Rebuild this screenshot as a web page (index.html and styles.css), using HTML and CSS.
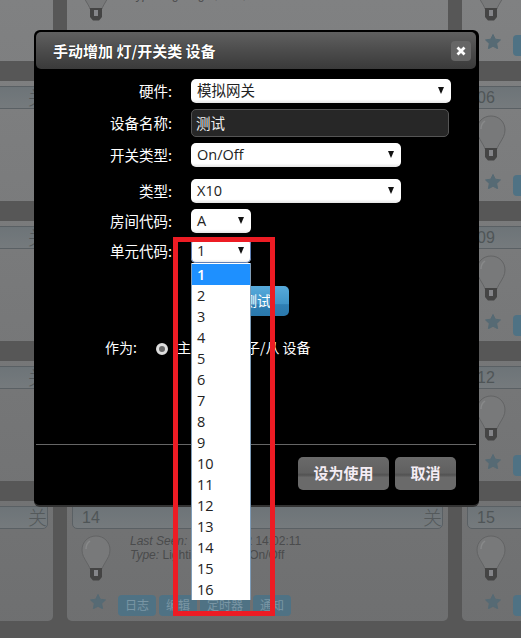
FILE: index.html
```html
<!DOCTYPE html>
<html lang="en">
<head>
    <meta charset="UTF-8">
    <meta name="viewport" content="width=device-width, initial-scale=1.0">
    <title>手动增加 灯/开关类 设备</title>
    <link rel="stylesheet" href="styles.css">
</head>
<body>

<svg class="defs" width="0" height="0">
    <defs>
        <symbol id="bulb" viewBox="0 0 30 46">
            <path d="M15 1C7 1 1 7 1 15c0 5 2.500 8.500 4.500 12C7.500 30.500 8.500 32 9 34h12c.5-2 1.500-3.500 3.500-7 2-3.500 4.500-7 4.500-12C29 7 23 1 15 1z" fill="#78797a" stroke="#636465" stroke-width="1"/>
            <path d="M9 6c-3 2-4 5-4 8" fill="none" stroke="#88898a" stroke-width="1.500"/>
            <path d="M9 33h12v9l-3 3.500h-6l-3-3.500z" fill="#444"/>
            <path d="M13 35h4v6h-4z" fill="#85868a"/>
        </symbol>
        <symbol id="star" viewBox="0 0 16 15">
            <path d="M8 .5l2.300 4.700 5.200.7-3.800 3.600.9 5.200L8 12.300l-4.600 2.400.9-5.200L.5 5.900l5.200-.7z" fill="#566a74" stroke="#566a74" stroke-linejoin="round"/>
        </symbol>
    </defs>
</svg>

<div class="device-grid">
    <div class="card"><div class="strip"><span>01</span><span class="state">关</span></div><div class="card-body"><svg class="bulb"><use href="#bulb"/></svg><p class="info"><i>Last Seen:</i> 2016-05-12 14:02:11<br><i>Type:</i> Lighting 1, X10, On/Off</p></div><div class="card-foot"><svg class="star"><use href="#star"/></svg><a class="tag">日志</a><a class="tag">编辑</a><a class="tag">定时器</a><a class="tag">通知</a></div></div>
    <div class="card"><div class="strip"><span>02</span><span class="state">关</span></div><div class="card-body"><svg class="bulb"><use href="#bulb"/></svg><p class="info"><i>Last Seen:</i> 2016-05-12 14:02:11<br><i>Type:</i> Lighting 1, X10, On/Off</p></div><div class="card-foot"><svg class="star"><use href="#star"/></svg><a class="tag">日志</a><a class="tag">编辑</a><a class="tag">定时器</a><a class="tag">通知</a></div></div>
    <div class="card"><div class="strip"><span>03</span><span class="state">关</span></div><div class="card-body"><svg class="bulb"><use href="#bulb"/></svg><p class="info"><i>Last Seen:</i> 2016-05-12 14:02:11<br><i>Type:</i> Lighting 1, X10, On/Off</p></div><div class="card-foot"><svg class="star"><use href="#star"/></svg><a class="tag">日志</a><a class="tag">编辑</a><a class="tag">定时器</a><a class="tag">通知</a></div></div>

    <div class="card"><div class="strip"><span>04</span><span class="state">关</span></div><div class="card-body"><svg class="bulb"><use href="#bulb"/></svg><p class="info"><i>Last Seen:</i> 2016-05-12 14:02:11<br><i>Type:</i> Lighting 1, X10, On/Off</p></div><div class="card-foot"><svg class="star"><use href="#star"/></svg><a class="tag">日志</a><a class="tag">编辑</a><a class="tag">定时器</a><a class="tag">通知</a></div></div>
    <div class="card"><div class="strip"><span>05</span><span class="state">关</span></div><div class="card-body"><svg class="bulb"><use href="#bulb"/></svg><p class="info"><i>Last Seen:</i> 2016-05-12 14:02:11<br><i>Type:</i> Lighting 1, X10, On/Off</p></div><div class="card-foot"><svg class="star"><use href="#star"/></svg><a class="tag">日志</a><a class="tag">编辑</a><a class="tag">定时器</a><a class="tag">通知</a></div></div>
    <div class="card"><div class="strip"><span>06</span><span class="state">关</span></div><div class="card-body"><svg class="bulb"><use href="#bulb"/></svg><p class="info"><i>Last Seen:</i> 2016-05-12 14:02:11<br><i>Type:</i> Lighting 1, X10, On/Off</p></div><div class="card-foot"><svg class="star"><use href="#star"/></svg><a class="tag">日志</a><a class="tag">编辑</a><a class="tag">定时器</a><a class="tag">通知</a></div></div>

    <div class="card"><div class="strip"><span>07</span><span class="state">关</span></div><div class="card-body"><svg class="bulb"><use href="#bulb"/></svg><p class="info"><i>Last Seen:</i> 2016-05-12 14:02:11<br><i>Type:</i> Lighting 1, X10, On/Off</p></div><div class="card-foot"><svg class="star"><use href="#star"/></svg><a class="tag">日志</a><a class="tag">编辑</a><a class="tag">定时器</a><a class="tag">通知</a></div></div>
    <div class="card"><div class="strip"><span>08</span><span class="state">关</span></div><div class="card-body"><svg class="bulb"><use href="#bulb"/></svg><p class="info"><i>Last Seen:</i> 2016-05-12 14:02:11<br><i>Type:</i> Lighting 1, X10, On/Off</p></div><div class="card-foot"><svg class="star"><use href="#star"/></svg><a class="tag">日志</a><a class="tag">编辑</a><a class="tag">定时器</a><a class="tag">通知</a></div></div>
    <div class="card"><div class="strip"><span>09</span><span class="state">关</span></div><div class="card-body"><svg class="bulb"><use href="#bulb"/></svg><p class="info"><i>Last Seen:</i> 2016-05-12 14:02:11<br><i>Type:</i> Lighting 1, X10, On/Off</p></div><div class="card-foot"><svg class="star"><use href="#star"/></svg><a class="tag">日志</a><a class="tag">编辑</a><a class="tag">定时器</a><a class="tag">通知</a></div></div>

    <div class="card"><div class="strip"><span>10</span><span class="state">关</span></div><div class="card-body"><svg class="bulb"><use href="#bulb"/></svg><p class="info"><i>Last Seen:</i> 2016-05-12 14:02:11<br><i>Type:</i> Lighting 1, X10, On/Off</p></div><div class="card-foot"><svg class="star"><use href="#star"/></svg><a class="tag">日志</a><a class="tag">编辑</a><a class="tag">定时器</a><a class="tag">通知</a></div></div>
    <div class="card"><div class="strip"><span>11</span><span class="state">关</span></div><div class="card-body"><svg class="bulb"><use href="#bulb"/></svg><p class="info"><i>Last Seen:</i> 2016-05-12 14:02:11<br><i>Type:</i> Lighting 1, X10, On/Off</p></div><div class="card-foot"><svg class="star"><use href="#star"/></svg><a class="tag">日志</a><a class="tag">编辑</a><a class="tag">定时器</a><a class="tag">通知</a></div></div>
    <div class="card"><div class="strip"><span>12</span><span class="state">关</span></div><div class="card-body"><svg class="bulb"><use href="#bulb"/></svg><p class="info"><i>Last Seen:</i> 2016-05-12 14:02:11<br><i>Type:</i> Lighting 1, X10, On/Off</p></div><div class="card-foot"><svg class="star"><use href="#star"/></svg><a class="tag">日志</a><a class="tag">编辑</a><a class="tag">定时器</a><a class="tag">通知</a></div></div>

    <div class="card"><div class="strip"><span>13</span><span class="state">关</span></div><div class="card-body"><svg class="bulb"><use href="#bulb"/></svg><p class="info"><i>Last Seen:</i> 2016-05-12 14:02:11<br><i>Type:</i> Lighting 1, X10, On/Off</p></div><div class="card-foot"><svg class="star"><use href="#star"/></svg><a class="tag">日志</a><a class="tag">编辑</a><a class="tag">定时器</a><a class="tag">通知</a></div></div>
    <div class="card"><div class="strip"><span>14</span><span class="state">关</span></div><div class="card-body"><svg class="bulb"><use href="#bulb"/></svg><p class="info"><i>Last Seen:</i> 2016-05-12 14:02:11<br><i>Type:</i> Lighting 1, X10, On/Off</p></div><div class="card-foot"><svg class="star"><use href="#star"/></svg><a class="tag">日志</a><a class="tag">编辑</a><a class="tag">定时器</a><a class="tag">通知</a></div></div>
    <div class="card"><div class="strip"><span>15</span><span class="state">关</span></div><div class="card-body"><svg class="bulb"><use href="#bulb"/></svg><p class="info"><i>Last Seen:</i> 2016-05-12 14:02:11<br><i>Type:</i> Lighting 1, X10, On/Off</p></div><div class="card-foot"><svg class="star"><use href="#star"/></svg><a class="tag">日志</a><a class="tag">编辑</a><a class="tag">定时器</a><a class="tag">通知</a></div></div>
</div>

<div class="modal">
    <div class="modal-title">
        <h3>手动增加 灯/开关类 设备</h3>
        <a class="close">
            <svg width="10" height="10" viewBox="0 0 10 10"><path d="M1.500 1.500l7 7M8.500 1.500l-7 7" stroke="#fff" stroke-width="2.800"/></svg>
        </a>
    </div>

    <div class="form">
        <div class="row">
            <label>硬件:</label>
            <div class="select wide">模拟网关</div>
        </div>
        <div class="row">
            <label>设备名称:</label>
            <div class="text-input">测试</div>
        </div>
        <div class="row">
            <label>开关类型:</label>
            <div class="select medium">On/Off</div>
        </div>
        <div class="row spaced">
            <label>类型:</label>
            <div class="select medium">X10</div>
        </div>
        <div class="row">
            <label>房间代码:</label>
            <div class="select small">A</div>
        </div>
        <div class="row">
            <label>单元代码:</label>
            <div class="select small focused">1
                <ul class="dropdown">
                    <li class="active">1</li>
                    <li>2</li>
                    <li>3</li>
                    <li>4</li>
                    <li>5</li>
                    <li>6</li>
                    <li>7</li>
                    <li>8</li>
                    <li>9</li>
                    <li>10</li>
                    <li>11</li>
                    <li>12</li>
                    <li>13</li>
                    <li>14</li>
                    <li>15</li>
                    <li>16</li>
                </ul>
            </div>
        </div>

        <a class="btn-test">测试</a>

        <div class="role">
            <span class="role-label">作为:</span>
            <span class="radio checked"></span>
            <span>主设备</span>
            <span class="radio"></span>
            <span>子/从 设备</span>
        </div>
    </div>

    <div class="modal-foot">
        <a class="btn">设为使用</a>
        <a class="btn">取消</a>
    </div>
</div>

<div class="mark"></div>

</body>
</html>
```

FILE: styles.css
```css
body {
    margin: 0;
    width: 521px;
    height: 638px;
    overflow: hidden;
    background-color: #575757;
    font-family: "Open Sans", "Noto Sans CJK SC", sans-serif;
    font-size: 14px;
}
.defs {
    display: block;
    height: 0;
}

/* device cards behind the dialog */
.device-grid {
    display: grid;
    grid-template-columns: repeat(3, 381px);
    gap: 20px 14px;
    margin: -59px 0 0 -328px;
}
.card {
    height: 120px;
    box-sizing: border-box;
    padding: 5px 5px 0;
    border-radius: 0 0 5px 5px;
    background: linear-gradient(#808182, #6e6f70) fixed;
}
.strip {
    display: flex;
    justify-content: space-between;
    box-sizing: border-box;
    height: 23px;
    padding: 0 0 0 9px;
    border: 1px solid #5a6064;
    border-radius: 0 0 5px 5px;
    background: linear-gradient(#6d7478, #757a7d);
    color: #4f5557;
    font-family: "Liberation Sans", sans-serif;
    font-size: 16px;
    line-height: 21px;
}
.state {
    font-family: "Noto Sans CJK SC", sans-serif;
    font-size: 19px;
    font-weight: 300;
    line-height: 20px;
    color: #54595b;
}
.card-body {
    display: flex;
    height: 46px;
    margin-top: 6px;
    padding-left: 9px;
}
.bulb {
    width: 30px;
    height: 46px;
}
.info {
    margin: -1px 0 0 19px;
    font-family: "Liberation Sans", sans-serif;
    font-size: 12px;
    line-height: 14px;
    color: #4a4b4c;
}
.card-foot {
    display: flex;
    align-items: center;
    gap: 3px;
    margin-top: 13px;
    padding-left: 18px;
}
.star {
    width: 16px;
    height: 15px;
    margin: 0 9px 8px 0;
}
.tag {
    height: 21px;
    padding: 0 7px;
    border-radius: 4px;
    background-color: #4f7284;
    color: #7a96a5;
    font-size: 12px;
    line-height: 21px;
}

/* dialog */
.modal {
    position: absolute;
    left: 34px;
    top: 30px;
    display: flex;
    flex-direction: column;
    box-sizing: border-box;
    width: 445px;
    height: 477px;
    padding: 2px 3px 0 2px;
    border-bottom: 2px solid #333;
    border-radius: 6px;
    background-color: #000;
    color: #fff;
    font-family: "Noto Sans CJK SC", sans-serif;
}
.modal-title {
    display: flex;
    justify-content: space-between;
    align-items: center;
    height: 37px;
    padding: 0 5px 0 17px;
    border-radius: 5px;
    background: linear-gradient(#606060, #4a4a4a 55%, #3a3a3a);
}
.modal-title h3 {
    margin: 0;
    font-size: 15px;
    font-weight: 700;
    text-shadow: 0 0 1px #000;
}
.close {
    display: flex;
    justify-content: center;
    align-items: center;
    width: 20px;
    height: 20px;
    border-radius: 4px;
    background-color: #666;
}
.form {
    padding-top: 10px;
}
.row {
    display: flex;
    align-items: center;
    gap: 19px;
    margin-bottom: 6px;
}
.row.spaced {
    margin-top: 12px;
}
.row label {
    width: 136px;
    text-align: right;
    font-size: 14.500px;
    line-height: 20px;
}
.select {
    position: relative;
    box-sizing: border-box;
    height: 24px;
    padding-left: 6px;
    border-radius: 5px;
    background: linear-gradient(#fff 85%, #e4e4e4);
    color: #222;
    font-family: "Open Sans", "Noto Sans CJK SC", sans-serif;
    font-size: 14.500px;
    line-height: 24px;
}
.select::after {
    content: "";
    position: absolute;
    right: 7px;
    top: 8px;
    border: 3.500px solid transparent;
    border-top: 7px solid #111;
    border-bottom: 0;
}
.select.wide {
    width: 260px;
}
.select.medium {
    width: 210px;
}
.select.small {
    width: 60px;
}
.select.focused {
    box-shadow: inset 0 0 0 1px #5f7fb5;
}
.text-input {
    box-sizing: border-box;
    width: 258px;
    height: 28px;
    padding-left: 4px;
    border: 1px solid #555;
    border-radius: 5px;
    background-color: #272727;
    color: #eee;
    font-size: 14.500px;
    line-height: 25px;
}
.dropdown {
    position: absolute;
    left: 0;
    top: 24px;
    z-index: 2;
    box-sizing: border-box;
    width: 60px;
    margin: 0;
    padding: 1px 0 0;
    border-left: 1px solid #7f9db9;
    border-right: 1px solid #7f9db9;
    list-style: none;
    background-color: #fff;
}
.dropdown li {
    height: 21px;
    padding-left: 5px;
    color: #222;
    line-height: 21px;
}
.dropdown li.active {
    background-color: #1e90ff;
    color: #fff;
    font-weight: 600;
}
.btn-test {
    display: block;
    width: 64px;
    height: 30px;
    margin: 23px 0 0 189px;
    border-radius: 5px;
    background: linear-gradient(#57aadb, #3f94c8 60%, #2f7fb4 62%, #2a78ac);
    text-align: center;
    font-size: 14px;
    line-height: 29px;
}
.role {
    display: flex;
    align-items: center;
    height: 20px;
    margin: 21px 0 0 69px;
    font-size: 14px;
}
.role-label {
    width: 51px;
}
.radio {
    box-sizing: border-box;
    width: 12px;
    height: 12px;
    margin: 3px 9px 0 0;
    border-radius: 50%;
    background-color: #ddd;
}
.radio.checked {
    border: 3px solid #ddd;
    background-color: #666;
}
.radio:not(.checked) {
    margin: 3px 5px 0 10px;
}
.modal-foot {
    display: flex;
    justify-content: flex-end;
    gap: 6px;
    margin-top: auto;
    padding: 12px 20px 15px 0;
    border-top: 1px solid #666;
}
.btn {
    height: 33px;
    padding: 0 15.500px;
    border-radius: 5px;
    background: linear-gradient(#6a6a6a, #606060 48%, #525252 54%, #6a6a6a 62%);
    color: #f4ecf4;
    font-size: 15px;
    font-weight: 700;
    line-height: 32px;
}

/* red annotation frame around the open list */
.mark {
    position: absolute;
    left: 173px;
    top: 237px;
    z-index: 3;
    box-sizing: border-box;
    width: 102px;
    height: 379px;
    border: 5px solid #ed1c24;
}
```
